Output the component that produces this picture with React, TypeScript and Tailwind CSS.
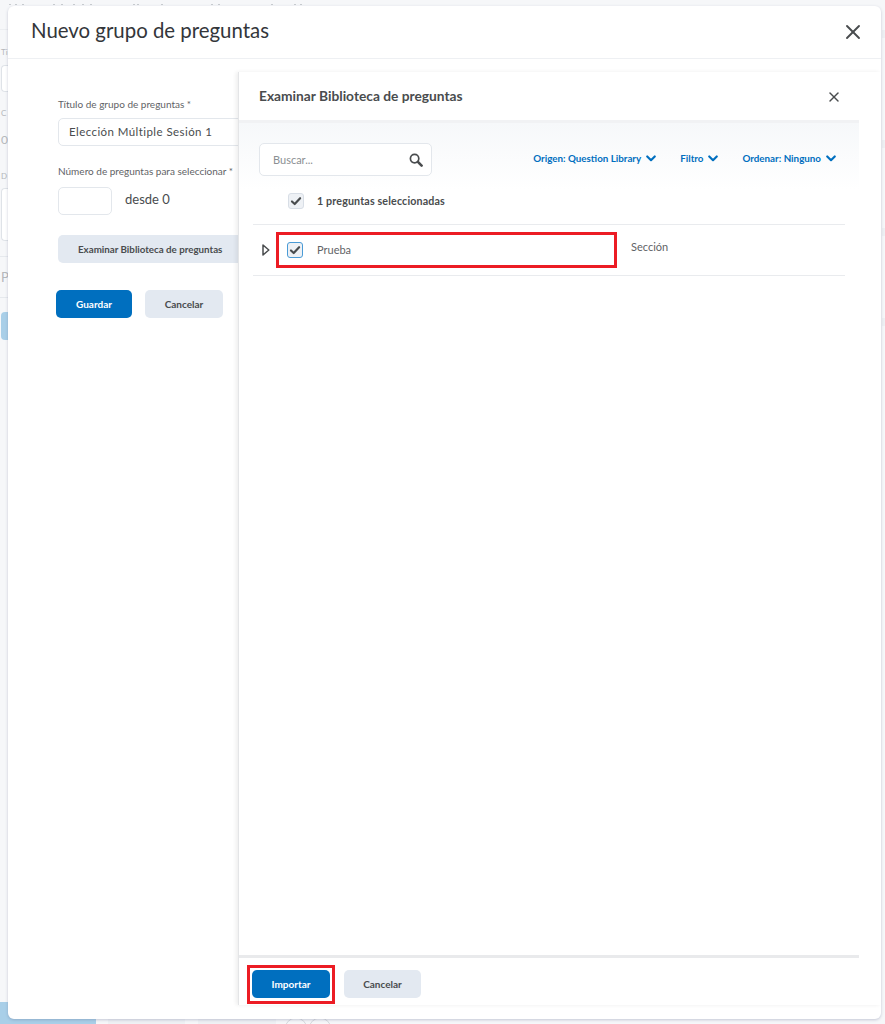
import { X } from "lucide-react";

function Check({ className }: { className?: string }) {
  return (
    <svg viewBox="0 0 14 14" className={className} fill="none">
      <path d="M2.3 7.5 5.5 10.6 11.8 3.7" stroke="#494c4e" strokeWidth="2.5" strokeLinecap="round" strokeLinejoin="round" />
    </svg>
  );
}

function Chevron() {
  return (
    <svg viewBox="0 0 12 8" className="ml-[5px] h-[7px] w-[10px]" fill="none">
      <path d="M1.5 1.6 6 6 10.5 1.6" stroke="#006fbf" strokeWidth="2.6" strokeLinecap="round" strokeLinejoin="round" />
    </svg>
  );
}

function SearchIcon() {
  return (
    <svg viewBox="0 0 14 14" className="h-[14px] w-[14px]" fill="none">
      <circle cx="5.6" cy="5.6" r="4.2" stroke="#494c4e" strokeWidth="1.7" />
      <path d="M8.9 8.9 12.6 12.6" stroke="#494c4e" strokeWidth="2.6" strokeLinecap="round" />
    </svg>
  );
}

function FilterLink({ label }: { label: string }) {
  return (
    <span className="flex items-center text-[9.8px] font-bold text-[#006fbf]">
      {label}
      <Chevron />
    </span>
  );
}

const topMarks = [9, 15, 22, 53, 61, 73, 82, 90, 133, 137, 161, 211, 218, 271, 294, 300];

// page behind the dialog, only a sliver shows on the edges
function BackgroundPage() {
  return (
    <div className="relative flex h-[1024px] justify-between bg-[#f6f7f9] text-[#b5b8bb]">
      <div className="flex w-[8px] flex-col">
        <div className="h-[30px] border-b border-[#eceef1]" />
        <div className="h-[17px]" />
        <div className="pl-[1px] text-[8px] leading-[10px]">Ti</div>
        <div className="ml-[1px] mt-[8px] h-[27px] rounded-l-[4px] border border-r-0 border-[#dfe3e8] bg-white" />
        <div className="mt-[16px] pl-[1px] text-[8px] leading-[10px]">C</div>
        <div className="mt-[15px] pl-[1px] text-[12px] leading-[14px]">0</div>
        <div className="mt-[24px] pl-[1px] text-[8px] leading-[10px]">D</div>
        <div className="ml-[1px] mt-[7px] h-[53px] rounded-l-[4px] border border-r-0 border-[#dfe3e8] bg-white" />
        <div className="mt-[15px] border-t border-[#e6e9ed]" />
        <div className="mt-[12px] pl-[1px] text-[13px] leading-[16px]">P</div>
        <div className="mt-[12px] border-t border-[#e6e9ed]" />
        <div className="ml-[1px] mt-[14px] h-[28px] rounded-l-[4px] bg-[#a9cfe8]" />
      </div>

      <div className="flex w-[3px] flex-col">
        <div className="mt-[30px] h-[8px] bg-[#eef0f3]" />
        <div className="mt-[102px] h-[8px] bg-[#eef0f3]" />
        <div className="mt-[80px] h-[8px] bg-[#eef0f3]" />
        <div className="mt-[82px] h-[8px] bg-[#eef0f3]" />
      </div>

      {topMarks.map((x) => (
        <span key={x} className="absolute top-[4px] h-[1px] w-[2px] bg-[#c9ccd0]" style={{ left: x }} />
      ))}

      <div className="absolute bottom-0 left-0 flex h-[22px] w-full items-stretch">
        <div className="w-[96px] bg-[#a9cfe8]" />
        <div className="ml-[12px] w-[77px] bg-[#eff1f4]" />
        <div className="ml-[13px] w-[78px] bg-[#eff1f4]" />
        <svg viewBox="0 0 44 22" className="ml-[10px] h-[22px] w-[44px]" fill="none">
          <circle cx="10" cy="27" r="11" stroke="#d5d8dc" strokeWidth="1" />
          <circle cx="34" cy="27" r="11" stroke="#d5d8dc" strokeWidth="1" />
        </svg>
      </div>
    </div>
  );
}

export default function App() {
  return (
    <div className="relative h-[1024px] w-[885px] overflow-hidden font-['Lato',sans-serif] text-[#494c4e]">
      <BackgroundPage />

      <div className="absolute left-[8px] top-[6px] flex h-[1013px] w-[873px] flex-col rounded-[6px] bg-white shadow-[0_1px_3px_rgba(80,90,130,0.3)]">
        <div className="flex h-[53px] shrink-0 items-center justify-between border-b border-[#eef0f3] pl-[23px] pr-[16px]">
          <h1 className="-mt-[5px] text-[20.4px] leading-[24px] text-[#33363a]">Nuevo grupo de preguntas</h1>
          <X className="h-[24px] w-[24px] text-[#494c4e]" strokeWidth={1.9} />
        </div>

        <div className="flex min-h-0 flex-1 pt-[13px]">
          <div className="w-[230px] shrink-0 overflow-hidden pl-[50px] pt-[25px]">
            <div className="text-[10px] leading-[14px] text-[#5f6366]">Título de grupo de preguntas *</div>
            <div className="mt-[7px] flex h-[28px] w-[240px] items-center rounded-[5px] border border-[#e3e7ec] pl-[10px] text-[11.5px] tracking-[0.43px]">
              Elección Múltiple Sesión 1
            </div>
            <div className="mt-[18px] whitespace-nowrap text-[10px] leading-[14px] text-[#5f6366]">
              Número de preguntas para seleccionar *
            </div>
            <div className="mt-[9px] flex items-center">
              <div className="h-[28px] w-[54px] rounded-[5px] border border-[#e3e7ec]" />
              <span className="-mt-[2px] ml-[13px] text-[13px]">desde 0</span>
            </div>
            <div className="mt-[20px] flex h-[28px] w-[240px] items-center rounded-l-[5px] bg-[#e3e9f1] pl-[20px] text-[9.75px] font-bold">
              Examinar Biblioteca de preguntas
            </div>
            <div className="-ml-[2px] mt-[27px] flex gap-[13px]">
              <div className="flex h-[28px] w-[76px] items-center justify-center rounded-[5px] bg-[#006fbf] text-[10px] font-bold text-white">
                Guardar
              </div>
              <div className="flex h-[28px] w-[78px] items-center justify-center rounded-[5px] bg-[#e3e9f1] text-[10px] font-bold">
                Cancelar
              </div>
            </div>
          </div>

          <div className="flex h-[933px] flex-1 flex-col border-l border-[#e4e5e7] shadow-[-2px_0_4px_rgba(0,0,0,0.07)]">
            <div className="flex h-[48px] shrink-0 items-center justify-between pl-[20px] pr-[39px]">
              <h2 className="text-[13.75px] font-bold">Examinar Biblioteca de preguntas</h2>
              <X className="mt-[2px] h-[16px] w-[16px]" strokeWidth={2.2} />
            </div>

            <div className="mr-[22px] h-[70px] shrink-0 border-t-[3px] border-[#f1f2f4] bg-gradient-to-b from-[#f6f8fa] to-white">
              <div className="flex items-center justify-between pl-[20px] pr-[23px] pt-[20px]">
                <div className="flex h-[33px] w-[173px] items-center justify-between rounded-[5px] border border-[#e3e7ec] bg-white pl-[13px] pr-[8px] text-[11px] text-[#8b8f93]">
                  <span className="mt-[1px]">Buscar...</span>
                  <SearchIcon />
                </div>
                <div className="-mt-[3px] flex gap-[24px]">
                  <FilterLink label="Origen: Question Library" />
                  <FilterLink label="Filtro" />
                  <FilterLink label="Ordenar: Ninguno" />
                </div>
              </div>
            </div>

            <div className="flex h-[34px] shrink-0 items-center pb-[12px] pl-[49px]">
              <div className="flex h-[16px] w-[16px] items-center justify-center rounded-[3px] border border-[#d8dee6] bg-[#eef1f5]">
                <Check className="h-[12px] w-[12px]" />
              </div>
              <span className="ml-[13px] text-[10.7px] font-bold tracking-[0.15px]">1 preguntas seleccionadas</span>
            </div>

            <div className="ml-[14px] mr-[36px] flex h-[52px] shrink-0 items-center border-y border-[#e9ebee]">
              <svg viewBox="0 0 8 12" className="ml-[9px] h-[12px] w-[8px]" fill="none">
                <path d="M1 1 6.8 6 1 11Z" stroke="#494c4e" strokeWidth="1.5" strokeLinejoin="round" />
              </svg>
              <div className="ml-[6px] flex h-[36px] w-[341px] items-center border-[3px] border-[#ec1c24] pl-[8px]">
                <div className="flex h-[16px] w-[16px] items-center justify-center rounded-[3px] border-[1.5px] border-[#4a9bd6] bg-[#eef1f5]">
                  <Check className="h-[12px] w-[12px]" />
                </div>
                <span className="ml-[14px] text-[11px] text-[#5f6366]">Prueba</span>
              </div>
              <span className="-mt-[6px] ml-[14px] text-[11px] text-[#5f6366]">Sección</span>
            </div>

            <div className="flex-1" />

            <div className="mr-[22px] flex h-[50px] shrink-0 items-center border-t-[3px] border-[#e9eaec] pl-[8px] pt-[5px]">
              <div className="flex h-[39px] w-[88px] items-center justify-center border-[3px] border-[#ec1c24]">
                <div className="flex h-[28px] w-[78px] items-center justify-center rounded-[5px] bg-[#006fbf] text-[10px] font-bold text-white">
                  Importar
                </div>
              </div>
              <div className="ml-[9px] flex h-[28px] w-[77px] items-center justify-center rounded-[5px] bg-[#e3e9f1] text-[10px] font-bold">
                Cancelar
              </div>
            </div>
          </div>
        </div>
      </div>
    </div>
  );
}
